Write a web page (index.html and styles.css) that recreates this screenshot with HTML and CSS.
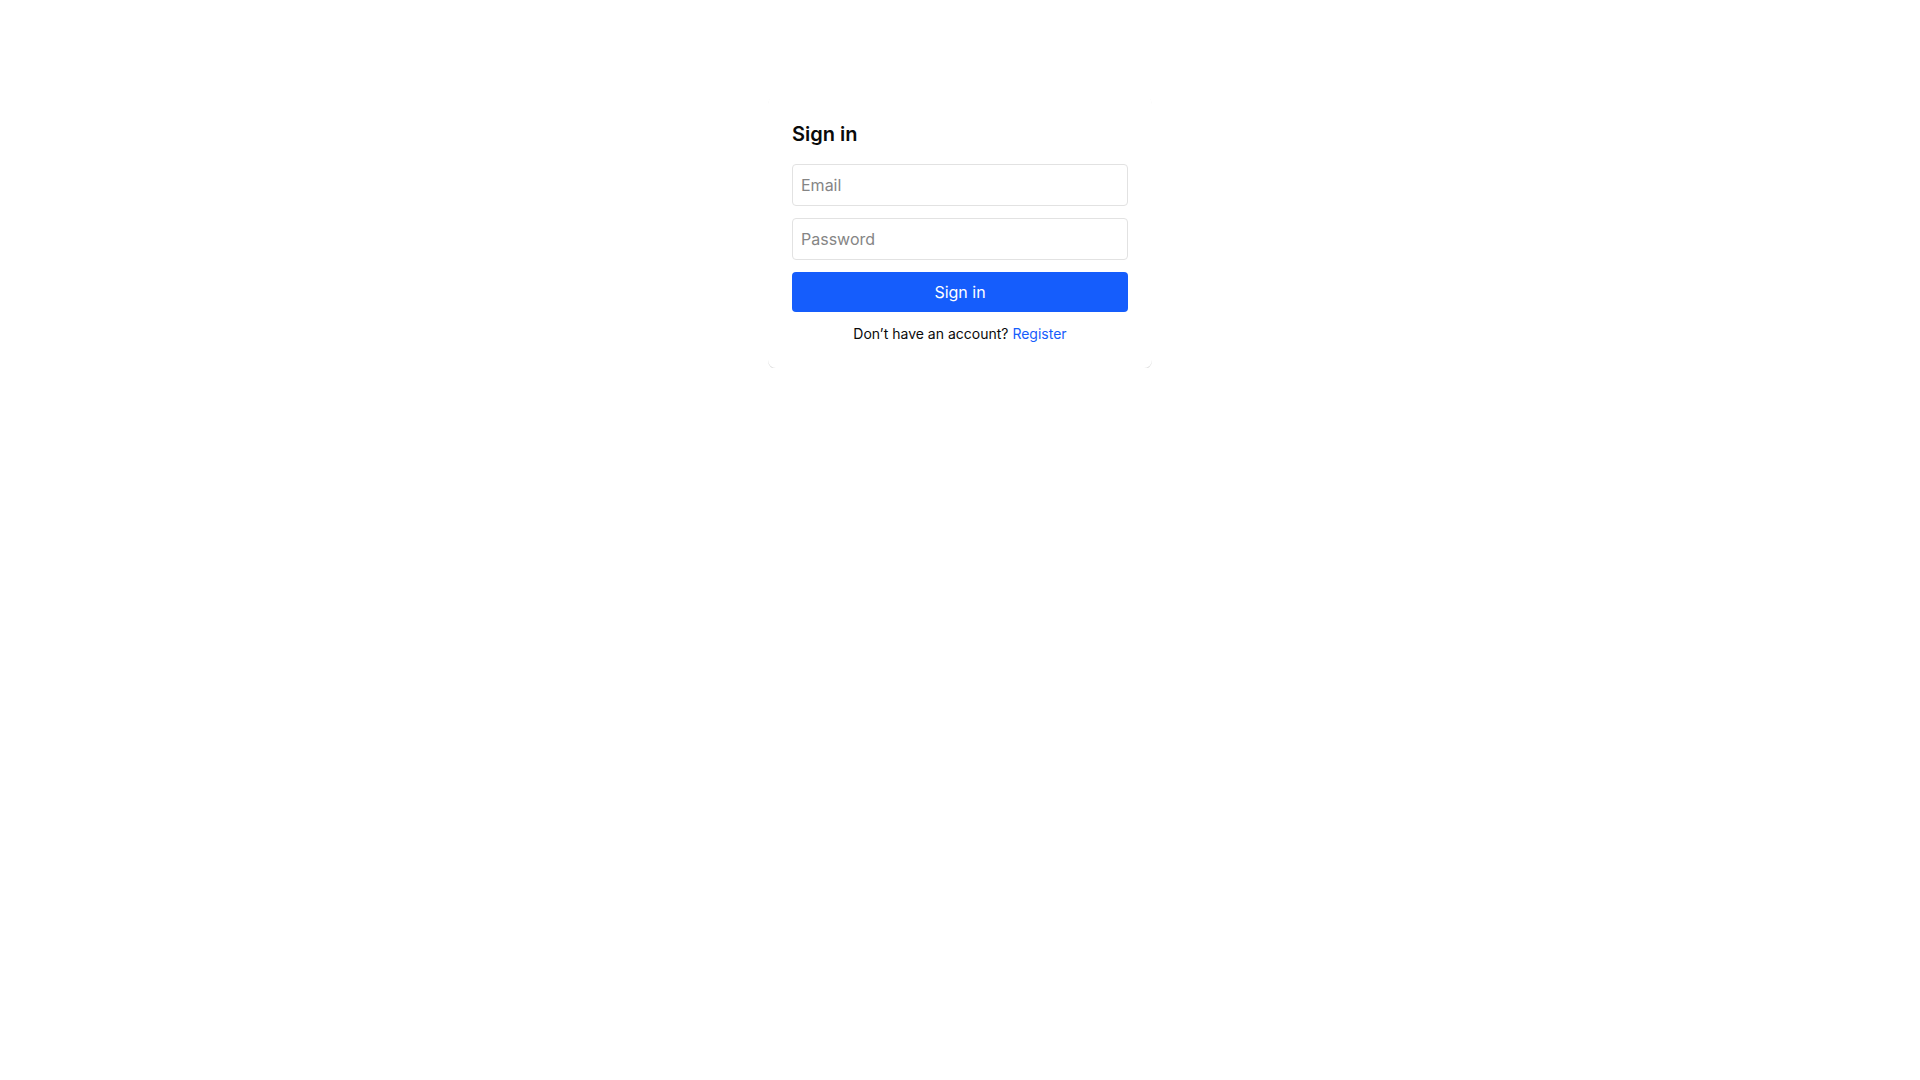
FILE: index.html
```html
<!DOCTYPE html>
<html lang="en">
<head>
  <meta charset="UTF-8" />
  <meta name="viewport" content="width=device-width, initial-scale=1.0" />
  <title>Sign in</title>
  <link rel="stylesheet" href="styles.css">
</head>
<body>

  <main class="card">
    <h1>Sign in</h1>
    <form class="login-form">
      <input type="email" name="email" placeholder="Email" aria-label="Email" required />
      <input type="password" name="password" placeholder="Password" aria-label="Password" required />
      <button type="submit">Sign in</button>
    </form>
    <p class="register">Don’t have an account? <a href="#register">Register</a></p>
  </main>

</body>
</html>
```

FILE: styles.css
```css
:root {
  --blue: #155dfc;
  --text: #0a0a0a;
  --border: #e2e2e2;
  --placeholder: #858585;
}

* {
  box-sizing: border-box;
}

body {
  margin: 0;
  font-family: Inter, sans-serif;
  font-size: 16px;
  line-height: 24px;
  background-color: #ffffff;
  color: var(--text);
}

.card {
  max-width: 384px;
  margin: 96px auto 0;
  padding: 24px;
  border-radius: 8px;
  background-color: #ffffff;
  box-shadow: 0 1px 0 rgba(0, 0, 0, 0.13);
}

.card h1 {
  margin: 0 0 16px;
  font-size: 20px;
  line-height: 28px;
  font-weight: 600;
}

.login-form {
  display: flex;
  flex-direction: column;
  gap: 12px;
}

.login-form input {
  width: 100%;
  padding: 8px;
  border: 1px solid var(--border);
  border-radius: 4px;
  font: inherit;
  color: inherit;
  background-color: transparent;
}

.login-form input::placeholder {
  color: var(--placeholder);
}

.login-form button {
  padding: 8px;
  border: none;
  border-radius: 4px;
  font: inherit;
  color: #ffffff;
  background-color: var(--blue);
  cursor: pointer;
}

.register {
  margin: 12px 0 0;
  font-size: 14px;
  line-height: 20px;
  text-align: center;
}

.register a {
  color: var(--blue);
  text-decoration: none;
}

.register a:hover {
  text-decoration: underline;
}
```
